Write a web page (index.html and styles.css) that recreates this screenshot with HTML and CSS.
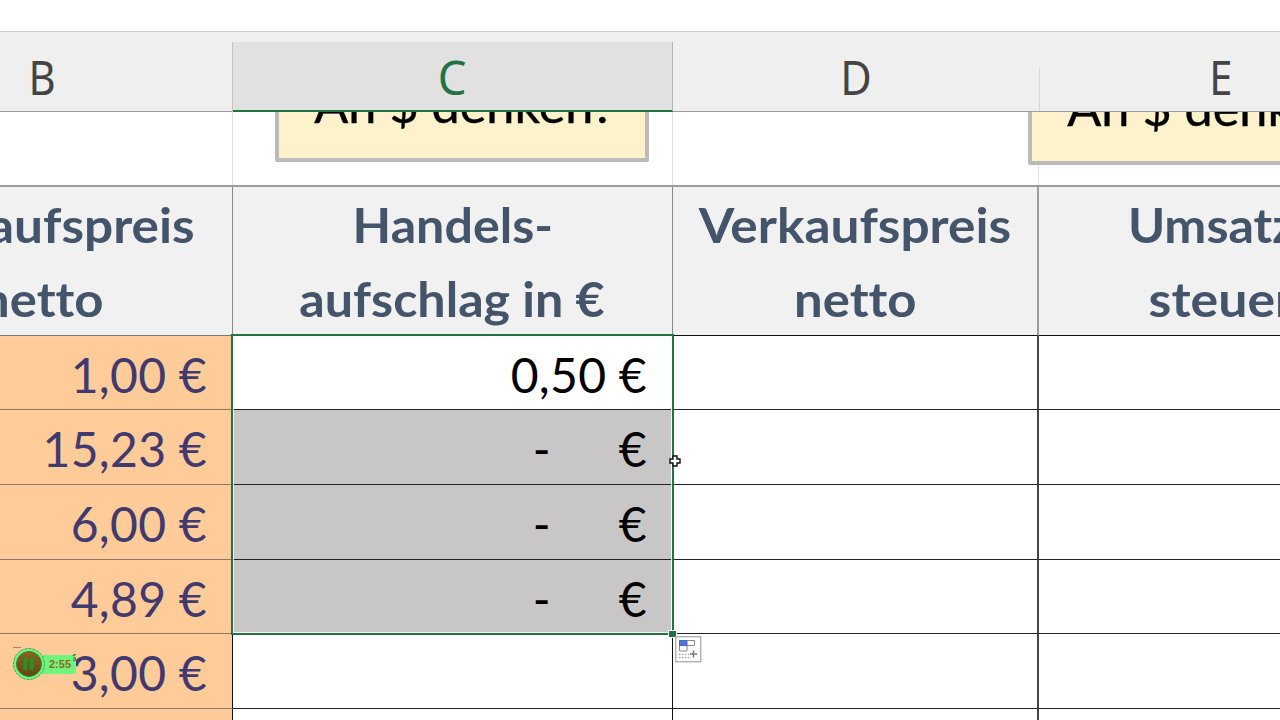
FILE: index.html
```html
<!DOCTYPE html>
<html lang="de">
<head>
<meta charset="utf-8">
<title>Kalkulation</title>
<link rel="stylesheet" href="styles.css">
</head>
<body>
<main class="sheet">
  <div class="row letters">
    <div class="letter"><span>B</span></div>
    <div class="letter active"><span>C</span></div>
    <div class="letter"><span>D</span></div>
    <div class="letter faded"><span>E</span></div>
  </div>
  <div class="row notes">
    <div class="blank"></div><div class="blank"></div><div class="blank"></div><div class="blank"></div>
    <div class="note note-c"><span>An $ denken?</span></div>
    <div class="note note-e"><span>An $ denken?</span></div>
  </div>
  <div class="row titles">
    <div class="title"><span class="t-preis">Einkaufspreis</span><span class="t-netto">netto</span></div>
    <div class="title"><span>Handels-</span><span>aufschlag in €</span></div>
    <div class="title"><span class="t-preis">Verkaufspreis</span><span class="t-netto">netto</span></div>
    <div class="title"><span>Umsatz-</span><span class="t-steuer">steuer</span></div>
  </div>
  <div class="row data"><div class="cell cost">1,00 €</div><div class="cell first">0,50 €</div><div class="cell"></div><div class="cell"></div></div>
  <div class="row data"><div class="cell cost">15,23 €</div><div class="cell picked"><span>-</span><span>€</span></div><div class="cell"></div><div class="cell"></div></div>
  <div class="row data"><div class="cell cost">6,00 €</div><div class="cell picked"><span>-</span><span>€</span></div><div class="cell"></div><div class="cell"></div></div>
  <div class="row data"><div class="cell cost">4,89 €</div><div class="cell picked"><span>-</span><span>€</span></div><div class="cell"></div><div class="cell"></div></div>
  <div class="row data"><div class="cell cost">3,00 €</div><div class="cell"></div><div class="cell"></div><div class="cell"></div></div>
  <div class="row data"><div class="cell cost"></div><div class="cell"></div><div class="cell"></div><div class="cell"></div></div>

  <div class="selection"></div>
  <div class="handle"></div>
  <svg class="cursor" width="12" height="12" viewBox="0 0 12 12"><path d="M4 1h4v3h3v4H8v3H4V8H1V4h3z" fill="#fff" stroke="#111" stroke-width="1.4"/></svg>
  <svg class="fill-options" width="27" height="27" viewBox="0 0 27 27">
    <rect x=".75" y=".75" width="25" height="25" fill="#fff" stroke="#aaa" stroke-width="1.3"/>
    <path d="M4.500 4.500h15v5h-15zM4.500 9.500h7.500v5.500h-7.500z" fill="#fff" stroke="#888"/>
    <path d="M4.500 4.500h7.500v5h-7.500z" fill="#4b78d4" stroke="#416bc0"/>
    <path d="M4 18.500h10M4 21.500h10" stroke="#999" stroke-dasharray="1.500 1.500"/>
    <path d="M18.500 14.500v7M15 18h7" stroke="#777" stroke-width="1.500"/>
  </svg>
  <div class="timer">
    <svg width="34" height="36" viewBox="0 0 34 36">
      <defs><linearGradient id="dial" x1="0" y1="0" x2="0" y2="1"><stop offset="0" stop-color="#8a651f"/><stop offset="1" stop-color="#5e4516"/></linearGradient></defs>
      <path d="M1 1.500h8" stroke="#c26b9a"/>
      <circle cx="17" cy="18" r="15.500" fill="#6df57c" stroke="#4f9f5b" stroke-dasharray="3 1"/>
      <circle cx="17" cy="18" r="12.500" fill="url(#dial)" stroke="#467b2b"/>
      <path d="M14 12l-1 12M20.500 12l-1 12" stroke="#269321" stroke-width="4"/>
    </svg>
    <span>2:55</span>
    <svg class="notch" width="5" height="9" viewBox="0 0 5 9"><path d="M1 2q1-2 3-1M1 4h3M1 6q2 1 3-1" fill="none" stroke="#3d6b3f" stroke-width="1.200"/></svg>
  </div>
</main>
</body>
</html>
```
FILE: styles.css
```css
* { box-sizing: border-box; }
body { margin: 0; background: #fff; }
.sheet {
  position: relative;
  width: 1280px;
  height: 720px;
  padding-top: 31px;
  overflow: hidden;
  font-family: Lato, "Open Sans", sans-serif;
  font-size: 48px;
  font-variant-ligatures: none;
  color: #000;
}
.row {
  display: grid;
  grid-template-columns: 381px 440px 365.500px 366px;
  width: 1552.500px;
  margin-left: -148px;
}
.letters {
  height: 81px;
  background: #efefef;
  border-top: 1px solid #cfcfcf;
  border-bottom: 1px solid #9c9c9c;
  font-family: "Noto Sans", sans-serif;
  color: #444;
}
.letter { text-align: center; line-height: 89px; height: 79px; }
.letter span { display: inline-block; transform: translateX(-.5px) scaleX(.87); }
.active {
  margin-top: 10px;
  height: 70px;
  line-height: 69px;
  background: #e1e1e1;
  border-bottom: 2.500px solid #217346;
  border-right: 1px solid #b4b4b4;
  box-shadow: -1px 0 #c4c4c4;
  color: #217346;
}
.active span { transform: scaleX(.95); }
.letter:nth-child(3) span { transform: translateX(.5px) scaleX(.9); }
.faded {
  background: linear-gradient(transparent 40%, #d9d9d9 50%) 0 0 / 1px 100% no-repeat;
}
.notes { position: relative; height: 73px; overflow: hidden; }
.blank { border-right: 1px solid #e2e2e2; }
.note {
  position: absolute;
  width: 374px;
  height: 90px;
  background: #fdf2cb;
  border: 4px solid #bbb;
  border-radius: 2px;
  line-height: 58px;
  white-space: nowrap;
  text-align: center;
}
.note span {
  display: inline-block;
  transform: translateX(2.500px) scaleX(1.05);
  -webkit-text-stroke: .4px #000;
}
.note-c { left: 423px; top: -40px; }
.note-e { left: 1176px; top: -37px; }
.title {
  height: 150.600px;
  padding-top: 1px;
  display: flex;
  flex-direction: column;
  align-items: center;
  background: #f1f1f1;
  border-top: 2px solid #9c9c9c;
  border-right: 1px solid #888;
  border-bottom: 1px solid #777;
  font-weight: 700;
  color: #44546a;
  line-height: 73.500px;
}
.title span { transform: scaleX(1.046); }
.title .t-preis { transform: scaleX(1.07); }
.title .t-netto { transform: translateX(.5px) scaleX(1.06); }
.title .t-steuer { transform: scaleX(1.08); }
.title:nth-child(n+3) { border-bottom-color: #111; }
.title:nth-child(3) { border-right: 2px solid #9c9c9c; }
.data { height: 74.700px; }
.cell {
  height: 74.700px;
  padding-right: 25px;
  border-right: 1px solid #111;
  border-bottom: 1px solid #222;
  line-height: 77.500px;
  letter-spacing: .3px;
  text-align: right;
  white-space: nowrap;
}
.cell:nth-child(3) { border-right: 2px solid #444; }
.cost { background: #ffcc99; color: #42396e; border-bottom-color: #8c7862; }
.picked {
  display: flex;
  justify-content: flex-end;
  gap: 68px;
  background: #c8c6c6;
}
.selection {
  position: absolute;
  left: 231px;
  top: 334px;
  width: 443px;
  height: 301px;
  border: 2px solid #217346;
  box-shadow: inset 0 0 0 1px #fff;
}
.handle {
  position: absolute;
  left: 668px;
  top: 630px;
  width: 9px;
  height: 8px;
  background: #217346;
  border: 1px solid #fff;
}
.cursor { position: absolute; left: 669px; top: 455px; }
.fill-options { position: absolute; left: 675px; top: 636px; }
.timer {
  position: absolute;
  left: 12px;
  top: 646px;
  display: flex;
  align-items: center;
}
.timer svg { position: relative; z-index: 1; }
.timer span {
  width: 34px;
  height: 19px;
  margin-left: -4px;
  padding-left: 7px;
  background: #6df57c;
  border-radius: 2px;
  font: 700 11px/19px "Liberation Sans", sans-serif;
  color: #996624;
}
.timer .notch { margin: -12px 0 0 -4px; }
```
